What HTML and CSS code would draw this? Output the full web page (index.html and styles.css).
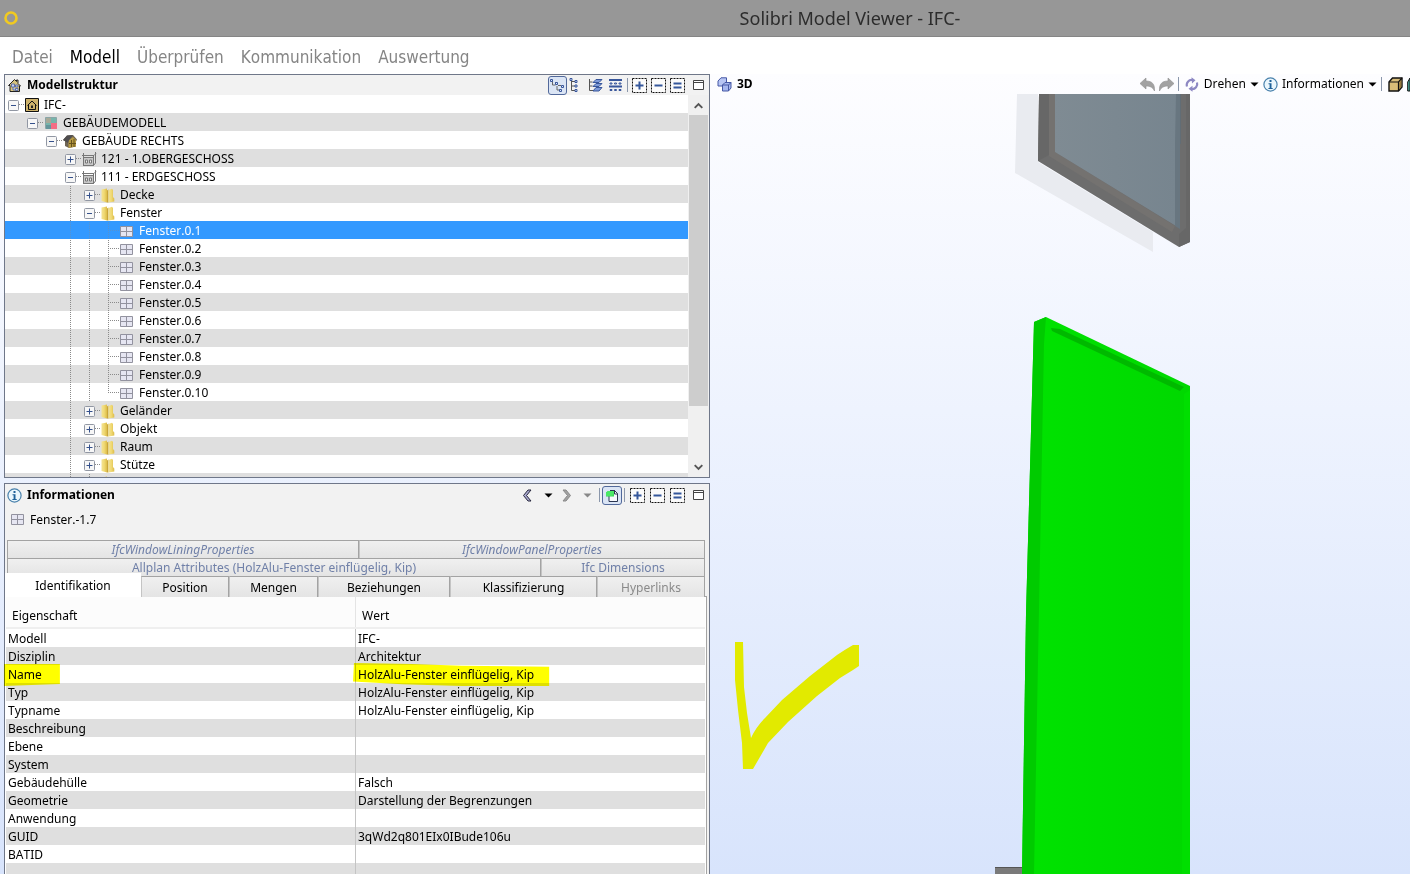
FILE: index.html
```html
<!DOCTYPE html>
<html lang="de">
<head>
<meta charset="utf-8">
<title>Solibri Model Viewer - IFC-</title>
<link rel="stylesheet" href="styles.css">
</head>
<body>
<svg class="defs" aria-hidden="true">
  <defs>
    <linearGradient id="gold" x1="0" x2="1"><stop offset="0" stop-color="#f3e394"/><stop offset=".5" stop-color="#f0d973"/><stop offset="1" stop-color="#dcbc4a"/></linearGradient>
    <linearGradient id="glass" x1="0" x2="1"><stop offset="0" stop-color="#7f8b93"/><stop offset="1" stop-color="#77858f"/></linearGradient>
    <linearGradient id="green" x1="0" x2="1"><stop offset="0" stop-color="#00e300"/><stop offset="1" stop-color="#00d800"/></linearGradient>
  </defs>
  <symbol id="minus" viewBox="0 0 11 11"><rect x=".5" y=".5" width="10" height="10" rx="1" fill="#f7f7f7" stroke="#9197a3"/><path d="M3 5.500h5" stroke="#35518c"/></symbol>
  <symbol id="plus" viewBox="0 0 11 11"><rect x=".5" y=".5" width="10" height="10" rx="1" fill="#f7f7f7" stroke="#9197a3"/><path d="M2.500 5.500h6M5.500 2.500v6" stroke="#35518c"/></symbol>
  <symbol id="structure" viewBox="0 0 15 15"><path d="M1.500 7.500 7.500 1.500l2 2V2h1.500v3.500l2.500 2.500h-1v5.500H3V7.500z" fill="#d8c37c" stroke="#222"/><path d="M4.500 6h3v3h-3zM6 9v3h3M8.500 7h2.500v2H8.500zM8.500 10.500h2.500v2H8.500z" fill="#c9d4f2" stroke="#5568a0" stroke-width=".9"/></symbol>
  <symbol id="model" viewBox="0 0 15 15"><path d="M.5.500h13v13H.5z" fill="#cdb26b" stroke="#111"/><path d="M2.500 7.500 7 3l4.500 4.500M3.500 7v4.500h7V7" fill="none" stroke="#111"/><path d="M6 7.500h2v2.500H6z" fill="#222"/></symbol>
  <symbol id="discipline" viewBox="0 0 15 15"><path d="M1.500 1.500h11v11h-11z" fill="#76b5ac" stroke="#8aa5a6"/><path d="M2 2h5v5H2z" fill="#a7a998"/><path d="M7 7h6v6H7z" fill="#f46d85"/><path d="M2 9h5v4H2z" fill="#65969c"/></symbol>
  <symbol id="building" viewBox="0 0 15 15"><path d="M0 6 4 1.500 10 1l4 4.500-1 2v5L6 14 2 12V7z" fill="#6f6555"/><path d="M5.500 6.500 10 3l3 3v6.500L5.500 14z" fill="#b69a42"/><path d="M0 6 4 1.500 10 1 6 6 5 9z" fill="#4f4d4f"/><path d="M8.500 6v7M11 5v8M6 9.500h7" stroke="#67531d"/></symbol>
  <symbol id="storey" viewBox="0 0 15 15"><path d="M1.500 1v13M13.500 0v11M0 3.500h12l2-2M1 13.500h10.500l2-2.500M11.500 3v11M1.500 5.500h10" stroke="#777" fill="none"/><path d="M2 6h9v7H2z" fill="#c9c9c9"/><path d="M3.500 8h2v3h-2zM7.500 8h2v3h-2z" fill="#eee" stroke="#777"/></symbol>
  <symbol id="folder" viewBox="0 0 15 15"><path d="M.5 1.500 6 .5v14L.5 13z" fill="url(#gold)"/><path d="M6 2.500 7.500 1.500v13H6z" fill="#c9a63a"/><path d="M7.500 2 11 .8l1 1.200v7l1.300 1.500v3L7.500 14.500z" fill="url(#gold)"/></symbol>
  <symbol id="window" viewBox="0 0 15 15"><path d="M.5 2.500h12v10H.5z" fill="#e6e6f2" stroke="#92929f"/><path d="M6.500 3v9M1 7.500h11" stroke="#92929f"/></symbol>
  <symbol id="info" viewBox="0 0 15 15"><circle cx="7.500" cy="7.500" r="6.600" fill="#eaf6fd" stroke="#4a82ac" stroke-width="1.200"/><path d="M6.500 3h2v2h-2zM5.500 6.300h3v4.700h1.200v1H5.400v-1h1.200V7.300H5.500z" fill="#1f6199"/></symbol>
  <symbol id="hier" viewBox="0 0 15 15"><path d="M2.500 3v4h3M5 4.500h2M7 8v4h3M8 7.500h3" fill="none" stroke="#666"/><g fill="#dce7ff" stroke="#38569b"><path d="M.5 1.500h2v2h-2zM5.500 4.500h2v2h-2zM11.500 7.500h2v2h-2zM9.500 11.500h2v2h-2z"/></g></symbol>
  <symbol id="list" viewBox="0 0 11 15"><path d="M2.500 1v11.500h4M2.500 3.500h4M2.500 8h4" fill="none" stroke="#555"/><g fill="#dce7ff" stroke="#38569b"><path d="M1 .5h2v2H1zM6 2.500h2v2H6zM6 7h2v2H6zM6 11.500h2v2H6z"/></g></symbol>
  <symbol id="layers" viewBox="0 0 15 15"><path d="M1.500 1v11.500h4M1.500 4h3M1.500 8h3" fill="none" stroke="#555"/><path d="M5 4.500 8 1.500h6l-3 3zM5 8.500l3-3h6l-3 3zM5 13l3-3.500h6L11 13z" fill="#7d9ad8" stroke="#38569b"/></symbol>
  <symbol id="grid" viewBox="0 0 15 15"><path d="M1 2h13M1 8.500h13" stroke="#38569b" stroke-width="2"/><path d="M2 5h2v1H2zM6.500 5h2v1h-2zM11 5h2v1h-2zM2 11.500h2v1H2zM6.500 11.500h2v1h-2zM11 11.500h2v1h-2z" fill="#fff" stroke="#38569b"/></symbol>
  <symbol id="dplus" viewBox="0 0 15 15"><path d="M.5.500h14v14H.5z" fill="#fbfbfb" stroke="#111" stroke-dasharray="2 1"/><path d="M3.500 7.500h8M7.500 3.500v8" stroke="#34579b" stroke-width="2"/></symbol>
  <symbol id="dminus" viewBox="0 0 15 15"><path d="M.5.500h14v14H.5z" fill="#fbfbfb" stroke="#111" stroke-dasharray="2 1"/><path d="M3.500 7.500h8" stroke="#34579b" stroke-width="2"/></symbol>
  <symbol id="dequal" viewBox="0 0 15 15"><path d="M.5.500h14v14H.5z" fill="#fbfbfb" stroke="#111" stroke-dasharray="2 1"/><path d="M3.500 5.500h8M3.500 9.500h8" stroke="#34579b" stroke-width="2"/></symbol>
  <symbol id="maximize" viewBox="0 0 15 15"><path d="M2.500 2.500h10v9h-10z" fill="#fff" stroke="#444"/><path d="M2.500 4.500h10" stroke="#444"/></symbol>
  <symbol id="caret" viewBox="0 0 9 5"><path d="M.5.500h8L4.500 4.500z" fill="currentColor"/></symbol>
  <symbol id="back" viewBox="0 0 15 15"><path d="M7 2h3L5.500 7.500 10 13H7L2.500 7.500z" fill="#a9a9cf" stroke="#26263c"/></symbol>
  <symbol id="fwd" viewBox="0 0 15 15"><path d="M3 2h3l4.500 5.500L6 13H3l4.500-5.500z" fill="#a3a3a3" stroke="#8a8a8a"/></symbol>
  <symbol id="follow" viewBox="0 0 15 15"><path d="M5 2.500h4.500l3 3v8H4V5" fill="#f6f8fc" stroke="#2b3550"/><path d="M9.500 2v4h3" fill="none" stroke="#2b3550"/><path d="M1 4.500 3 3h6v5.500H1z" fill="#35d552"/><path d="M3 3h6v3L7 8H1V4.500z" fill="#4ae865"/></symbol>
  <symbol id="cubes" viewBox="0 0 15 15"><path d="M1 4 4 .8h5.500v5L7 9H1z" fill="#b8c6f4" stroke="#4658a5"/><path d="M5.500 8 8 5.500h6V11l-2.500 3h-6z" fill="#a6b7ef" stroke="#4658a5"/><path d="M5.500 8h6v6M11.500 8 14 5.500" fill="none" stroke="#4658a5"/></symbol>
  <symbol id="undo" viewBox="0 0 15 15"><path d="M0 6.500 6 1v3c6 0 9 3 8.500 10-1.500-3.500-4-5-8.500-5v3z" fill="#a2a2a2" stroke="#8f8f8f" stroke-width=".6"/></symbol>
  <symbol id="spin" viewBox="0 0 15 15"><g fill="none" stroke="#8d88c3" stroke-width="2.200"><path d="M2 9.500A5 5 0 0 1 7.500 3"/><path d="M12 5.500A5 5 0 0 1 6.500 12"/></g><path d="M6.500.300 10.500 3.200 7 6.400zM7.500 8.800v6L3.500 11.800z" fill="#8d88c3"/></symbol>
  <symbol id="box" viewBox="0 0 15 15"><path d="M1 5 4.500 1H14v9l-3.500 4H1z" fill="#d9bd78" stroke="#111" stroke-width="1.400"/><path d="M1 5h9.500v9M10.500 5 14 1" fill="none" stroke="#111" stroke-width="1.200"/><path d="M11.200 5.500 13.300 3v7l-2.100 2.500z" fill="#92763a"/></symbol>
</svg>

<header class="titlebar">
  <svg class="logo" viewBox="0 0 14 14"><circle cx="7" cy="7" r="5.500" fill="none" stroke="#f1ca20" stroke-width="2.600"/></svg>
  <h1>Solibri Model Viewer - IFC-</h1>
</header>
<nav class="menu">
  <a href="#">Datei</a><a href="#" class="current">Modell</a><a href="#">Überprüfen</a><a href="#">Kommunikation</a><a href="#">Auswertung</a>
</nav>

<main class="workspace">
  <div class="left">
    <section class="panel">
      <header class="bar">
        <svg class="icon"><use href="#structure"/></svg><h2>Modellstruktur</h2>
        <div class="tools">
          <button class="tool pressed" aria-label="Hierarchie"><svg class="icon"><use href="#hier"/></svg></button>
          <button class="tool narrow" aria-label="Liste"><svg class="icon"><use href="#list"/></svg></button>
          <button class="tool apart" aria-label="Ebenen"><svg class="icon"><use href="#layers"/></svg></button>
          <button class="tool wide" aria-label="Raster"><svg class="icon"><use href="#grid"/></svg></button>
          <span class="sep"></span>
          <button class="tool" aria-label="Hinzufügen"><svg class="icon"><use href="#dplus"/></svg></button>
          <button class="tool" aria-label="Entfernen"><svg class="icon"><use href="#dminus"/></svg></button>
          <button class="tool" aria-label="Setzen"><svg class="icon"><use href="#dequal"/></svg></button>
          <button class="tool last" aria-label="Maximieren"><svg class="icon"><use href="#maximize"/></svg></button>
        </div>
      </header>
      <div class="treebox">
        <ul class="tree">
          <li><button class="knob" aria-label="Zuklappen"><svg><use href="#minus"/></svg></button><svg class="icon"><use href="#model"/></svg>IFC-</li>
          <li><i></i><button class="knob" aria-label="Zuklappen"><svg><use href="#minus"/></svg></button><svg class="icon"><use href="#discipline"/></svg>GEBÄUDEMODELL</li>
          <li><i></i><i></i><button class="knob" aria-label="Zuklappen"><svg><use href="#minus"/></svg></button><svg class="icon"><use href="#building"/></svg>GEBÄUDE RECHTS</li>
          <li><i></i><i></i><i></i><button class="knob" aria-label="Aufklappen"><svg><use href="#plus"/></svg></button><svg class="icon"><use href="#storey"/></svg>121 - 1.OBERGESCHOSS</li>
          <li><i></i><i></i><i></i><button class="knob" aria-label="Zuklappen"><svg><use href="#minus"/></svg></button><svg class="icon"><use href="#storey"/></svg>111 - ERDGESCHOSS</li>
          <li><i></i><i></i><i></i><i class="line"></i><button class="knob" aria-label="Aufklappen"><svg><use href="#plus"/></svg></button><svg class="icon"><use href="#folder"/></svg>Decke</li>
          <li><i></i><i></i><i></i><i class="line"></i><button class="knob" aria-label="Zuklappen"><svg><use href="#minus"/></svg></button><svg class="icon"><use href="#folder"/></svg>Fenster</li>
          <li class="selected"><i></i><i></i><i></i><i class="line"></i><i class="line"></i><i class="branch"></i><svg class="icon"><use href="#window"/></svg>Fenster.0.1</li>
          <li><i></i><i></i><i></i><i class="line"></i><i class="line"></i><i class="branch"></i><svg class="icon"><use href="#window"/></svg>Fenster.0.2</li>
          <li><i></i><i></i><i></i><i class="line"></i><i class="line"></i><i class="branch"></i><svg class="icon"><use href="#window"/></svg>Fenster.0.3</li>
          <li><i></i><i></i><i></i><i class="line"></i><i class="line"></i><i class="branch"></i><svg class="icon"><use href="#window"/></svg>Fenster.0.4</li>
          <li><i></i><i></i><i></i><i class="line"></i><i class="line"></i><i class="branch"></i><svg class="icon"><use href="#window"/></svg>Fenster.0.5</li>
          <li><i></i><i></i><i></i><i class="line"></i><i class="line"></i><i class="branch"></i><svg class="icon"><use href="#window"/></svg>Fenster.0.6</li>
          <li><i></i><i></i><i></i><i class="line"></i><i class="line"></i><i class="branch"></i><svg class="icon"><use href="#window"/></svg>Fenster.0.7</li>
          <li><i></i><i></i><i></i><i class="line"></i><i class="line"></i><i class="branch"></i><svg class="icon"><use href="#window"/></svg>Fenster.0.8</li>
          <li><i></i><i></i><i></i><i class="line"></i><i class="line"></i><i class="branch"></i><svg class="icon"><use href="#window"/></svg>Fenster.0.9</li>
          <li><i></i><i></i><i></i><i class="line"></i><i class="line"></i><i class="branch end"></i><svg class="icon"><use href="#window"/></svg>Fenster.0.10</li>
          <li><i></i><i></i><i></i><i class="line"></i><button class="knob" aria-label="Aufklappen"><svg><use href="#plus"/></svg></button><svg class="icon"><use href="#folder"/></svg>Geländer</li>
          <li><i></i><i></i><i></i><i class="line"></i><button class="knob" aria-label="Aufklappen"><svg><use href="#plus"/></svg></button><svg class="icon"><use href="#folder"/></svg>Objekt</li>
          <li><i></i><i></i><i></i><i class="line"></i><button class="knob" aria-label="Aufklappen"><svg><use href="#plus"/></svg></button><svg class="icon"><use href="#folder"/></svg>Raum</li>
          <li><i></i><i></i><i></i><i class="line"></i><button class="knob" aria-label="Aufklappen"><svg><use href="#plus"/></svg></button><svg class="icon"><use href="#folder"/></svg>Stütze</li>
          <li><i></i><i></i><i></i><i class="line"></i><i class="line"></i><svg class="icon"><use href="#folder"/></svg></li>
        </ul>
        <div class="scroll">
          <svg viewBox="0 0 20 20"><path d="M6 13l4-4 4 4" fill="none" stroke="#555" stroke-width="2"/></svg>
          <div class="track"><div class="thumb"></div></div>
          <svg viewBox="0 0 20 20"><path d="M6 8l4 4 4-4" fill="none" stroke="#555" stroke-width="2"/></svg>
        </div>
      </div>
    </section>

    <section class="panel details">
      <header class="bar">
        <svg class="icon"><use href="#info"/></svg><h2>Informationen</h2>
        <div class="tools">
          <button class="tool wide" aria-label="Zurück"><svg class="icon"><use href="#back"/></svg></button>
          <button class="tool wide" aria-label="Verlauf zurück"><svg class="caret"><use href="#caret"/></svg></button>
          <button class="tool" aria-label="Vor"><svg class="icon"><use href="#fwd"/></svg></button>
          <button class="tool wide dim" aria-label="Verlauf vor"><svg class="caret"><use href="#caret"/></svg></button>
          <span class="sep"></span>
          <button class="tool wide pressed" aria-label="Auswahl folgen"><svg class="icon"><use href="#follow"/></svg></button>
          <span class="sep"></span>
          <button class="tool wide" aria-label="Hinzufügen"><svg class="icon"><use href="#dplus"/></svg></button>
          <button class="tool wide" aria-label="Entfernen"><svg class="icon"><use href="#dminus"/></svg></button>
          <button class="tool wide" aria-label="Setzen"><svg class="icon"><use href="#dequal"/></svg></button>
          <button class="tool last" aria-label="Maximieren"><svg class="icon"><use href="#maximize"/></svg></button>
        </div>
      </header>
      <p class="object"><svg class="icon"><use href="#window"/></svg>Fenster.-1.7</p>
      <div class="tabs" role="tablist">
        <div class="tabrow first"><button role="tab">IfcWindowLiningProperties</button><button role="tab">IfcWindowPanelProperties</button></div>
        <div class="tabrow second"><button role="tab">Allplan Attributes (HolzAlu-Fenster einflügelig, Kip)</button><button role="tab">Ifc Dimensions</button></div>
        <div class="tabrow third"><button role="tab" aria-selected="true">Identifikation</button><button role="tab">Position</button><button role="tab">Mengen</button><button role="tab">Beziehungen</button><button role="tab">Klassifizierung</button><button role="tab" disabled>Hyperlinks</button></div>
      </div>
      <div class="sheet">
        <table>
          <thead><tr><th>Eigenschaft</th><th>Wert</th></tr></thead>
          <tbody>
            <tr><td>Modell</td><td>IFC-</td></tr>
            <tr><td>Disziplin</td><td>Architektur</td></tr>
            <tr><td><span class="marked">Name<svg class="marker short" viewBox="0 0 60 22" preserveAspectRatio="none"><path d="M1 0H59V20L1 22z" fill="#ff0"/></svg></span></td><td><span class="marked">HolzAlu-Fenster einflügelig, Kip<svg class="marker" viewBox="0 0 200 26" preserveAspectRatio="none"><path d="M1 0 60 1 110 3 199 4V25H110L50 23 0 20z" fill="#ff0"/></svg></span></td></tr>
            <tr><td>Typ</td><td>HolzAlu-Fenster einflügelig, Kip</td></tr>
            <tr><td>Typname</td><td>HolzAlu-Fenster einflügelig, Kip</td></tr>
            <tr><td>Beschreibung</td><td></td></tr>
            <tr><td>Ebene</td><td></td></tr>
            <tr><td>System</td><td></td></tr>
            <tr><td>Gebäudehülle</td><td>Falsch</td></tr>
            <tr><td>Geometrie</td><td>Darstellung der Begrenzungen</td></tr>
            <tr><td>Anwendung</td><td></td></tr>
            <tr><td>GUID</td><td>3qWd2q801EIx0IBude106u</td></tr>
            <tr><td>BATID</td><td></td></tr>
            <tr><td></td><td></td></tr>
          </tbody>
        </table>
      </div>
    </section>
  </div>

  <section class="view">
    <header class="viewbar">
      <svg class="icon"><use href="#cubes"/></svg><h2>3D</h2>
      <div class="viewtools">
        <button aria-label="Rückgängig"><svg class="icon"><use href="#undo"/></svg></button>
        <button aria-label="Wiederholen"><svg class="icon flip"><use href="#undo"/></svg></button>
        <span class="sep"></span>
        <button class="text"><svg class="icon"><use href="#spin"/></svg>Drehen<svg class="caret"><use href="#caret"/></svg></button>
        <button class="text"><svg class="icon"><use href="#info"/></svg>Informationen<svg class="caret"><use href="#caret"/></svg></button>
        <span class="sep"></span>
        <button aria-label="Schnitt"><svg class="icon"><use href="#box"/></svg></button>
        <svg class="peek" viewBox="0 0 3 15"><path d="M3 1 .7 5v9H3z" fill="#4aa79a" stroke="#111"/></svg>
      </div>
    </header>
    <svg class="scene" viewBox="0 0 700 780" preserveAspectRatio="xMinYMin slice">
      <path d="M307 0H328V68L443 138V158L305 79z" fill="#e9ebf0"/>
      <path d="M329 0H480V148L469 153 328 67z" fill="#6d6d6d"/>
      <path d="M329 0h10v61l-11 6zM480 0v148l-11 5v-13l7-6V0z" fill="#676767"/>
      <path d="M339 0h6v58l120 74-3 6-123-76z" fill="#747270"/>
      <path d="M345 0H466V132L345 58z" fill="url(#glass)"/>
      <path d="M466 0h5v50h-5z" fill="#626d75"/><path d="M465 50v82l5 3V0h-4z" fill="#687680"/>
      <path d="M285 773h30v7h-30z" fill="#7a7a7a"/><path d="M285 773.500h30" stroke="#555"/>
      <path d="M324 228 336 223 480 292V780H312L316 520z" fill="url(#green)"/>
      <path d="M324 228 336 223 334 250 324 780H312L316 520z" fill="#00cb00"/>
      <path d="M341 234 350 235 474 293 470 297 342 237z" fill="#00b900"/>
      <path d="M474 300l6-4v484h-8z" fill="#00df00"/>
      <path d="M25 548H33L34 593 37 619 41 644Q46 633 55 624L72 606 100 582 127 561Q136 555 143 551H149V572L143 576 130 584 107 602 78 628 58 649 43 675H33L32 649 28 616 25 586z" fill="#e2ea00"/>
    </svg>
  </section>
</main>
</body>
</html>
```

FILE: styles.css
```css
* { box-sizing: border-box; }

body {
  margin: 0;
  height: 100vh;
  display: flex;
  flex-direction: column;
  overflow: hidden;
  background: #fff;
  color: #000;
  font: 12px/18px "Noto Sans", sans-serif;
  font-kerning: none;
}

button {
  margin: 0;
  padding: 0;
  border: 0;
  background: none;
  color: inherit;
  font: inherit;
  font-kerning: none;
}

svg { display: block; flex: none; }
.defs { position: absolute; width: 0; height: 0; }
.icon { width: 15px; height: 15px; }
.caret { width: 9px; height: 5px; }
.flip { transform: scaleX(-1); }

.titlebar {
  flex: none;
  height: 37px;
  display: flex;
  align-items: center;
  padding: 0 4px;
  background: #979797;
  border-bottom: 1px solid #858585;
}
.logo { width: 14px; height: 14px; }
.titlebar h1 {
  flex: 1;
  margin: 0;
  padding-left: 276px;
  text-align: center;
  font-size: 18px;
  font-weight: normal;
  line-height: 24px;
  color: #2c2c2c;
}

.menu {
  flex: none;
  height: 37px;
  display: flex;
  align-items: center;
  gap: 17px;
  padding: 2px 12px 0;
  font-family: "DejaVu Sans Condensed", "Noto Sans", sans-serif;
  font-size: 17px;
}
.menu a { color: #858585; text-decoration: none; }
.menu .current { color: #000; }

.workspace {
  flex: 1;
  min-height: 0;
  display: grid;
  grid-template-columns: calc(50% + 5px) minmax(0, 1fr);
  background: linear-gradient(#fdfdff, #eef3fe 42%, #d8e4fc);
}

.left {
  min-height: 0;
  padding-left: 4px;
  display: grid;
  grid-template-rows: minmax(0, 404fr) minmax(0, 391fr);
  gap: 5px;
}
.panel {
  min-height: 0;
  display: flex;
  flex-direction: column;
  border: 1px solid #6f7789;
  background: #f2f2f2;
}
.details { border-bottom: 0; }

.bar {
  flex: none;
  height: 20px;
  display: flex;
  align-items: center;
  padding: 0 1px 0 2px;
}
.details .bar { height: 22px; }
h2 { margin: 0 0 0 5px; font-size: 12px; line-height: 18px; }

.tools { margin-left: auto; display: flex; align-items: center; }
.tool {
  width: 19px;
  height: 19px;
  display: flex;
  align-items: center;
  justify-content: center;
}
.narrow { width: 14px; }
.wide { width: 20px; }
.apart { margin-left: 5px; }
.last { margin-left: 2px; }
.dim { color: #888; }
.pressed { border: 1px solid #52699b; border-radius: 3px; background: #dbe5f5; }
.sep { width: 1px; height: 14px; margin: 0 2px; background: #8b97ab; }

.treebox { flex: 1; min-height: 0; display: flex; background: #fff; }
.tree {
  flex: 1;
  margin: 0;
  padding: 0;
  list-style: none;
  overflow: hidden;
}
.tree li { height: 18px; padding-top: 2px; display: flex; align-items: center; white-space: nowrap; }
.tree li:nth-child(even) { background: #dfdfdf; }
.tree li.selected { background: #39f; color: #fff; }
.tree .icon { margin: 0 4px 0 1px; }
.tree i { width: 19px; height: 18px; flex: none; }
.line { background: repeating-linear-gradient(#8a8a8a 0 1px, transparent 1px 2px) 8px 0 / 1px 18px no-repeat; }
.branch {
  background:
    repeating-linear-gradient(#8a8a8a 0 1px, transparent 1px 2px) 8px 0 / 1px 18px no-repeat,
    repeating-linear-gradient(90deg, #8a8a8a 0 1px, transparent 1px 2px) 8px 8px / 11px 1px no-repeat;
}
.branch.end { background-size: 1px 9px, 11px 1px; }
.selected .line, .selected .branch { opacity: .4; }
.knob {
  width: 19px;
  height: 18px;
  flex: none;
  padding-left: 3px;
  display: flex;
  align-items: center;
  background: repeating-linear-gradient(90deg, #8a8a8a 0 1px, transparent 1px 2px) 14px 8px / 5px 1px no-repeat;
}
.knob svg { width: 11px; height: 11px; }

.scroll { width: 21px; display: flex; flex-direction: column; background: #f0f0f0; border: solid #f0f0f0; border-width: 0 1px; }
.scroll svg { width: 19px; height: 20px; }
.track { flex: 1; }
.thumb { height: 85%; background: #cdcdcd; }

.object { flex: none; height: 34px; margin: 0; padding: 5px 5px 0 6px; display: flex; gap: 4px; align-items: flex-start; }
.object .icon { height: 17px; }

.tabs { flex: none; padding: 0 4px 0 2px; position: relative; z-index: 1; margin-bottom: -1px; }
.tabrow { display: grid; }
.first { grid-template-columns: 352fr 346fr; }
.second { grid-template-columns: 534fr 164fr; }
.third { grid-template-columns: 134fr 88fr 89fr 132fr 147fr 108fr; }
.tabrow button {
  height: 18px;
  white-space: nowrap;
  line-height: 17px;
  border: solid #a3a3a3;
  border-width: 1px 1px 0;
  background: linear-gradient(#f0f0f0, #e4e4e4);
  color: #7080a8;
}
.tabrow button + button { border-left-color: #c4c4c4; }
.first button { font-style: italic; }
.third button { height: 21px; color: #000; }
.third button:disabled { color: #8a8a8a; }
.third button[aria-selected="true"] {
  height: 24px;
  margin: -3px 0 0 -2px;
  border: 0;
  background: #fff;
}

.sheet {
  flex: 1;
  min-height: 0;
  margin-right: 2px;
  padding: 0 1px;
  border: solid #a3a3a3;
  border-width: 1px 1px 0 0;
  background: #fff;
}
table { width: 100%; table-layout: fixed; border-collapse: collapse; }
th {
  height: 31px;
  padding: 7px 6px 0;
  text-align: left;
  font-weight: normal;
  background: #fcfcfc;
  border-bottom: 2px solid #efefef;
}
td { height: 18px; padding: 2px 2px 0; line-height: 16px; }
th + th { border-left: 1px solid #e4e4e4; }
td + td { border-left: 1px solid #c4c4c4; }
tbody tr:nth-child(even) { background: #dfdfdf; }
.marked { position: relative; }
.marker {
  position: absolute;
  top: -3px;
  left: -5px;
  width: calc(100% + 21px);
  height: 24px;
  mix-blend-mode: multiply;
}
.marker.short { top: -2px; width: calc(100% + 24px); height: 22px; }

.view { min-width: 0; min-height: 0; display: flex; flex-direction: column; }
.viewbar { flex: none; height: 20px; display: flex; align-items: center; padding-left: 7px; }
.viewbar h2 { margin-left: 5px; }
.viewtools { margin-left: auto; display: flex; align-items: center; gap: 4px; }
.viewtools .sep { margin: 0 2px 0 0; }
.viewtools button { display: flex; align-items: center; }
.viewtools .text { gap: 4px; }
.peek { width: 3px; height: 15px; }
.scene { flex: 1; min-height: 0; width: 100%; }
```
